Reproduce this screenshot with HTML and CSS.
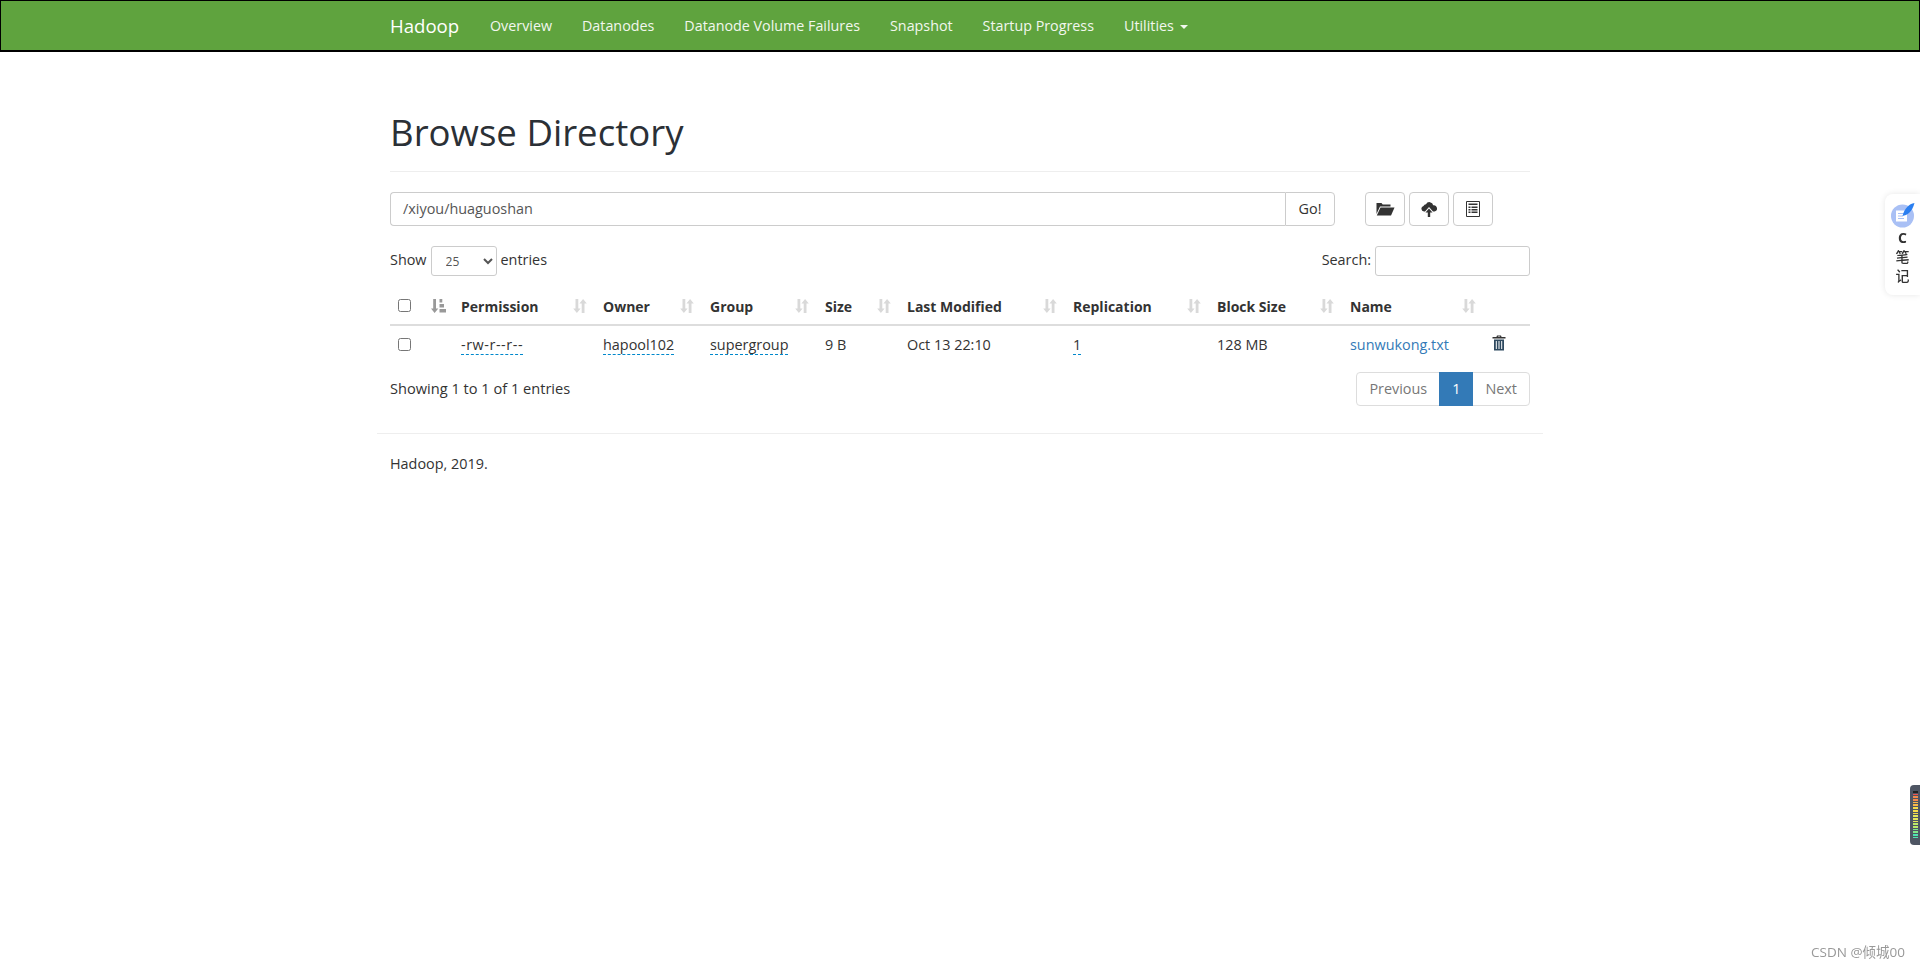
FILE: index.html
```html
<!DOCTYPE html>
<html lang="en">
<head>
<meta charset="utf-8">
<title>Browsing HDFS</title>
<link rel="stylesheet" href="styles.css">
</head>
<body>
<svg class="defs" width="0" height="0" aria-hidden="true">
  <symbol id="sort" viewBox="0 0 14 14"><path d="M2.500 0h2.800v9.500H7.600L3.900 14 .2 9.500h2.300zM6.400 4.500 10.100 0 13.800 4.500H11.500V14H8.700V4.500z"/></symbol>
</svg>
<nav class="navbar">
  <div class="nav-inner">
    <a class="brand">Hadoop</a>
    <a class="nav-link">Overview</a>
    <a class="nav-link">Datanodes</a>
    <a class="nav-link">Datanode Volume Failures</a>
    <a class="nav-link">Snapshot</a>
    <a class="nav-link">Startup Progress</a>
    <a class="nav-link">Utilities <span class="caret"></span></a>
  </div>
</nav>
<main class="container">
  <h1 class="page-title">Browse Directory</h1>
  <div class="toolbar">
    <div class="path-group">
      <div class="path-input">/xiyou/huaguoshan</div>
      <button class="go-btn">Go!</button>
    </div>
    <div class="icon-btns">
      <button class="icon-btn"><svg width="20" height="16" viewBox="0 0 20 16"><path d="M1.500 2h5l1.200 1.500h7.800v2H5L1.500 13z" fill="#333"/><path d="M5.500 6.500h14l-3.500 8H1.800z" fill="#333"/></svg></button>
      <button class="icon-btn"><svg width="16" height="18" viewBox="0 0 16 18"><path d="M4 11.500H3A2.800 2.800 0 0 1 2.500 6 3 3 0 0 1 5 4.300 3.800 3.800 0 0 1 12.200 5.300 3.100 3.100 0 0 1 13.500 11.500H12L8 7z" fill="#333"/><path d="M8 8.500 11.500 12.500H9.200V17H6.800V12.500H4.500z" fill="#333"/></svg></button>
      <button class="icon-btn"><svg width="14" height="16" viewBox="0 0 14 16"><path d="M.5.500h13v15H.5z" fill="#fff" stroke="#333"/><path d="M2.500 2.500h9v1.500h-9zM2.500 5.500h2v1.500h-2zM5.500 5.500h6v1.500h-6zM2.500 8h2v1.500h-2zM5.500 8h6v1.500h-6zM2.500 10.500h2V12h-2zM5.500 10.500h6V12h-6z" fill="#333"/></svg></button>
    </div>
  </div>
  <div class="controls">
    <label class="ctl">Show
      <select class="len-select"><option>25</option></select>
      entries</label>
    <label class="ctl">Search:
      <input class="search-input" type="text"></label>
  </div>
  <table class="listing">
    <thead>
      <tr>
        <th class="c-check"><input class="check check-head" type="checkbox"></th>
        <th class="c-sorted"><svg class="sort-on" width="15" height="14" viewBox="0 0 15 14"><path d="M2.200 0h2.800v9.500h2.300L3.600 14 0 9.500h2.200z"/><path d="M8.500 0h2.800v3.500H8.500zM8.500 5h4.500v3.500H8.500zM8.500 10h6.500v3.500H8.500z"/></svg></th>
        <th class="c-perm"><div class="th-in">Permission<svg class="sort-off"><use href="#sort"/></svg></div></th>
        <th class="c-owner"><div class="th-in">Owner<svg class="sort-off"><use href="#sort"/></svg></div></th>
        <th class="c-group"><div class="th-in">Group<svg class="sort-off"><use href="#sort"/></svg></div></th>
        <th class="c-size"><div class="th-in">Size<svg class="sort-off"><use href="#sort"/></svg></div></th>
        <th class="c-mod"><div class="th-in">Last Modified<svg class="sort-off"><use href="#sort"/></svg></div></th>
        <th class="c-rep"><div class="th-in">Replication<svg class="sort-off"><use href="#sort"/></svg></div></th>
        <th class="c-block"><div class="th-in">Block Size<svg class="sort-off"><use href="#sort"/></svg></div></th>
        <th class="c-name"><div class="th-in">Name<svg class="sort-off"><use href="#sort"/></svg></div></th>
        <th class="c-del"></th>
      </tr>
    </thead>
    <tbody>
      <tr>
        <td><input class="check" type="checkbox"></td>
        <td></td>
        <td><span class="editable perm">-rw-r--r--</span></td>
        <td><span class="editable">hapool102</span></td>
        <td><span class="editable">supergroup</span></td>
        <td>9 B</td>
        <td>Oct 13 22:10</td>
        <td><span class="editable">1</span></td>
        <td>128 MB</td>
        <td><a class="file-link">sunwukong.txt</a></td>
        <td><svg class="trash" width="14" height="16" viewBox="0 0 14 16"><path d="M5 .5h4l.6 1.500H13.500v1.500H.5V2h3.900zM6 1.500 5.800 2h2.400L8 1.500z" fill="#333" fill-rule="evenodd"/><path d="M2 4.500h10V15.500H2zM3.800 6v8h1V6zM6.500 6v8h1V6zM9.200 6v8h1V6z" fill="#2f4a60" fill-rule="evenodd"/></svg></td>
      </tr>
    </tbody>
  </table>
  <div class="table-foot">
    <div class="info">Showing 1 to 1 of 1 entries</div>
    <div class="pager">
      <a class="page prev">Previous</a>
      <a class="page current">1</a>
      <a class="page next">Next</a>
    </div>
  </div>
</main>
<footer class="site-foot">
  <hr class="foot-rule">
  <p class="foot-text">Hadoop, 2019.</p>
</footer>
<aside class="note-widget">
  <svg width="26" height="26" viewBox="0 0 26 26"><circle cx="12.500" cy="14" r="11.500" fill="#a9c0f5"/><path d="M6 8.500h11v11H6z" fill="#fff"/><path d="M8 11.500h6M8 14h5M8 16.500h6" stroke="#a9c0f5" stroke-width="1"/><path d="M24.500 1C19 2 14.500 6 12.500 14 17 13 22 10.500 24.500 1z" fill="#2b7ff0"/></svg>
  <span class="note-text"><b class="note-c">C</b><br>笔<br>记</span>
</aside>
<aside class="meter">
  <div class="bars">
    <i class="b b1"></i><i class="b b2"></i><i class="b b3"></i><i class="b b3"></i><i class="b b4"></i><i class="b b4"></i><i class="b b5"></i><i class="b b5"></i><i class="b b5"></i><i class="b b6"></i><i class="b b6"></i><i class="b b6"></i><i class="b b7"></i><i class="b b7"></i><i class="b b8"></i><i class="b b8"></i><i class="b b9"></i><i class="b b9"></i>
  </div>
</aside>
<div class="watermark">CSDN @倾城00</div>
</body>
</html>
```
FILE: styles.css
```css
* { box-sizing: border-box; }
html, body { margin: 0; height: 969px; overflow: hidden; }
body { background: #fff; color: #333; font: 14.4px/20px "Open Sans", "Noto Sans CJK SC", sans-serif; }
.defs { position: absolute; }
.navbar { height: 52px; background: #5fa33e; border: 1px solid #000; border-width: 1px 1px 2px; }
.nav-inner { width: 1170px; margin: 0 auto; padding: 0 15px; display: flex; align-items: center; height: 49px; }
.brand { color: #fff; font-size: 18.6px; width: 100px; }
.nav-link { color: #f2f7ee; padding-right: 30px; font-size: 14.3px; }
.caret { display: inline-block; width: 0; height: 0; margin-left: 2px; vertical-align: middle; border-top: 4px solid #f2f7ee; border-left: 4px solid transparent; border-right: 4px solid transparent; }
.container { width: 1170px; margin: 0 auto; padding: 0 15px; }
.page-title { margin: 0; padding: 55px 0 14px; height: 120px; font-size: 36.6px; line-height: 50px; font-weight: 400; color: #2b3036; border-bottom: 1px solid #eee; }
.toolbar { display: flex; margin-top: 20px; }
.path-group { display: flex; width: 945px; height: 34px; }
.path-input { flex: 1; border: 1px solid #ccc; border-right: 0; border-radius: 4px 0 0 4px; padding: 6px 12px; color: #555; }
.go-btn { width: 50px; background: #fff; border: 1px solid #ccc; border-radius: 0 4px 4px 0; font: inherit; color: #333; padding: 0; }
.icon-btns { display: flex; gap: 4px; margin-left: 30px; }
.icon-btn { width: 40px; height: 34px; background: #fff; border: 1px solid #ccc; border-radius: 4px; padding: 0; display: flex; align-items: center; justify-content: center; }
.controls { display: flex; justify-content: space-between; margin-top: 20px; height: 30px; line-height: 28px; }
.ctl { display: flex; align-items: flex-start; gap: 4px; }
.len-select { width: 66px; height: 30px; padding: 5px 10px; font: 12px "Open Sans", sans-serif; color: #555; background: #fff; border: 1px solid #ccc; border-radius: 3px; }
.search-input { width: 155px; height: 30px; border: 1px solid #ccc; border-radius: 3px; }
.listing { width: 1140px; margin-top: 14px; border-collapse: collapse; table-layout: fixed; }
.listing th { height: 35px; padding: 0 8px; text-align: left; font-size: 14px; font-weight: 700; border-bottom: 2px solid #ddd; }
.listing td { height: 37px; padding: 1px 8px 0; }
.th-in { display: flex; justify-content: space-between; align-items: center; }
.sort-off { width: 14px; height: 14px; fill: #d9d9d9; margin-top: -3px; }
.sort-on { fill: #999; display: block; margin-top: -3px; }
.c-check { width: 33px; }
.c-sorted { width: 30px; }
.c-perm { width: 142px; }
.c-owner { width: 107px; }
.c-group { width: 115px; }
.c-size { width: 82px; }
.c-mod { width: 166px; }
.c-rep { width: 144px; }
.c-block { width: 133px; }
.c-name { width: 142px; }
.check { display: block; width: 13px; height: 13px; margin: 0; }
.check-head { margin-top: -4px; }
.editable { border-bottom: 1px dashed #08c; }
.perm { letter-spacing: .55px; }
.file-link { color: #337ab7; }
.trash { display: block; margin: -3px 0 0 0; }
.table-foot { display: flex; justify-content: space-between; margin-top: 10px; }
.info { padding-top: 6px; font-size: 14.6px; }
.pager { display: flex; height: 34px; }
.page { padding: 6px 12px; border: 1px solid #ddd; color: #777; margin-left: -1px; background: #fff; }
.prev { border-radius: 4px 0 0 4px; }
.next { border-radius: 0 4px 4px 0; }
.current { background: #337ab7; border-color: #337ab7; color: #fff; z-index: 1; }
.site-foot { width: 1166px; margin: 0 auto; }
.foot-rule { margin: 27px 0 0; border: 0; border-top: 1px solid #eee; }
.foot-text { margin: 20px 13px 0; }
.note-widget { position: fixed; right: 0; top: 194px; width: 35px; height: 101px; background: #fff; border-radius: 8px 0 0 8px; box-shadow: 0 0 6px rgba(0,0,0,.1); display: flex; flex-direction: column; align-items: center; padding-top: 8px; }
.note-text { font-size: 14px; line-height: 19px; text-align: center; color: #333; font-weight: 500; }
.note-c { font-weight: 700; }
.meter { position: fixed; right: 0; top: 785px; width: 10px; height: 60px; background: #4e5563; border-radius: 4px 0 0 4px; padding: 6px 2px 0 3px; }
.bars { display: flex; flex-direction: column; gap: 1px; }
.b { display: block; height: 1.700px; }
.b1 { background: #222; }
.b2 { background: #ef5350; }
.b3 { background: #f58a4b; }
.b4 { background: #f9b84a; }
.b5 { background: #f6dc4a; }
.b6 { background: #e6e85a; }
.b7 { background: #bcea6a; }
.b8 { background: #7fe88a; }
.b9 { background: #4fe3b0; }
.watermark { position: fixed; right: 15px; top: 942px; font-size: 13.5px; line-height: 20px; color: #999; }
```
